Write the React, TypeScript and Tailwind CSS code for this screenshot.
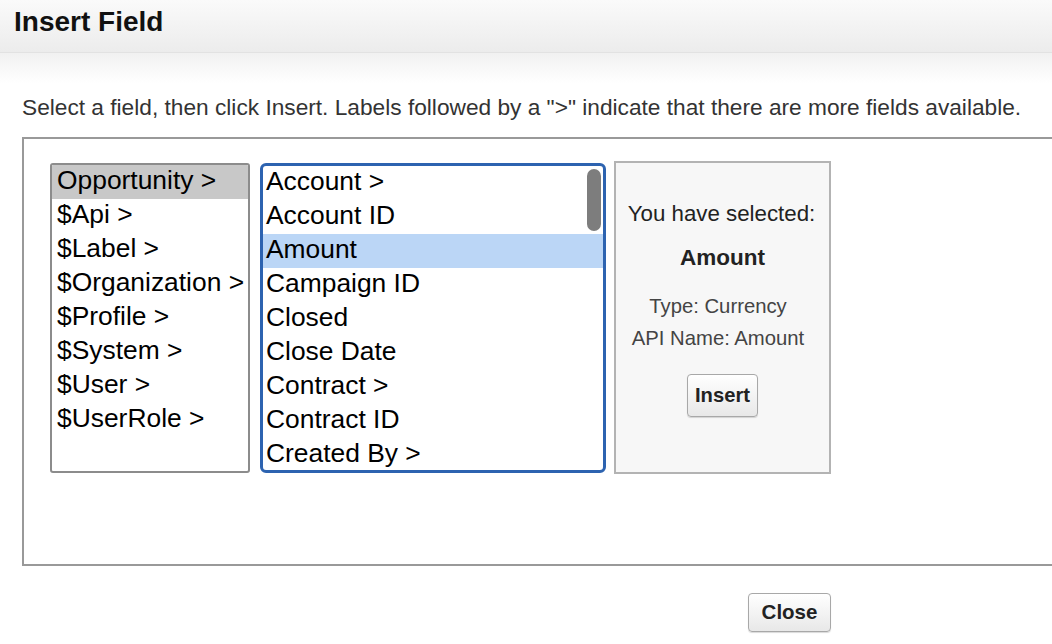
import React from "react";

const leftItems = ["Opportunity >", "$Api >", "$Label >", "$Organization >", "$Profile >", "$System >", "$User >", "$UserRole >"];
const midItems = ["Account >", "Account ID", "Amount", "Campaign ID", "Closed", "Close Date", "Contract >", "Contract ID", "Created By >"];

export default function App() {
  return (
    <div
      className="w-[1052px] h-[644px] overflow-hidden bg-white text-black"
      style={{ fontFamily: '"Liberation Sans", Arial, Helvetica, sans-serif' }}
    >
      <div className="h-[53px] bg-gradient-to-b from-[#fafafa] to-[#ececec] border-b border-[#e2e2e2] pl-[14px] pt-[6px]">
        <h1 className="text-[28px] leading-[32px] font-bold text-[#111]">Insert Field</h1>
      </div>
      <div className="h-[30px] bg-gradient-to-b from-[#f1f1f1] to-white" />
      <p className="mt-[11px] pl-[22px] text-[22.7px] leading-[26px] text-[#333] whitespace-nowrap">
        Select a field, then click Insert. Labels followed by a "&gt;" indicate that there are more fields available.
      </p>
      <div className="mt-[17px] ml-[22px] w-[1100px] h-[429px] border-2 border-[#999] pl-[26px] pt-[24px]">
        <div className="flex items-start">
          <div className="w-[200px] h-[310px] border-2 border-[#8c8c8c] rounded-[3px] bg-white overflow-hidden">
            {leftItems.map((t, i) => (
              <div
                key={t}
                className={`h-[34px] pl-[5px] text-[26.4px] leading-[31px] whitespace-nowrap ${i === 0 ? "bg-[#c8c8c8]" : ""}`}
              >
                {t}
              </div>
            ))}
          </div>
          <div className="relative ml-[10px] w-[346px] h-[310px] border-[3px] border-[#2d63b0] rounded-[6px] bg-white overflow-hidden">
            {midItems.map((t, i) => (
              <div
                key={t}
                className={`h-[34px] pl-[3px] text-[26.4px] leading-[31px] whitespace-nowrap ${i === 2 ? "bg-[#bbd6f6]" : ""}`}
              >
                {t}
              </div>
            ))}
            <div className="absolute right-[2px] top-[3px] w-[14px] h-[62px] rounded-full bg-[#7d7d7d]" />
          </div>
          <div className="ml-[8px] -mt-[2px] w-[217px] h-[313px] border-2 border-[#b3b3b3] bg-[#f7f7f7] flex flex-col items-center pt-[38px]">
            <div className="pr-[2px] text-[22.3px] leading-[26px] text-[#222] whitespace-nowrap">You have selected:</div>
            <div className="mt-[18px] text-[22.5px] leading-[26px] font-bold text-[#222]">Amount</div>
            <div className="mt-[19px] pr-[9px] text-[20.3px] leading-[32px] text-[#444] whitespace-nowrap">Type: Currency</div>
            <div className="pr-[9px] text-[20.3px] leading-[32px] text-[#444] whitespace-nowrap">API Name: Amount</div>
            <button className="mt-[20px] w-[71px] h-[43px] border border-[#a8a8a8] rounded-[4px] bg-gradient-to-b from-white to-[#e8e8e8] shadow-[0_1px_1px_rgba(0,0,0,0.15)] text-[20.2px] font-bold text-[#222]">
              Insert
            </button>
          </div>
        </div>
      </div>
      <div className="w-[831px] flex justify-end mt-[27px]">
        <button className="w-[83px] h-[39px] border border-[#a8a8a8] rounded-[4px] bg-gradient-to-b from-white to-[#e8e8e8] shadow-[0_1px_1px_rgba(0,0,0,0.15)] text-[20.5px] font-bold text-[#222]">
          Close
        </button>
      </div>
    </div>
  );
}
